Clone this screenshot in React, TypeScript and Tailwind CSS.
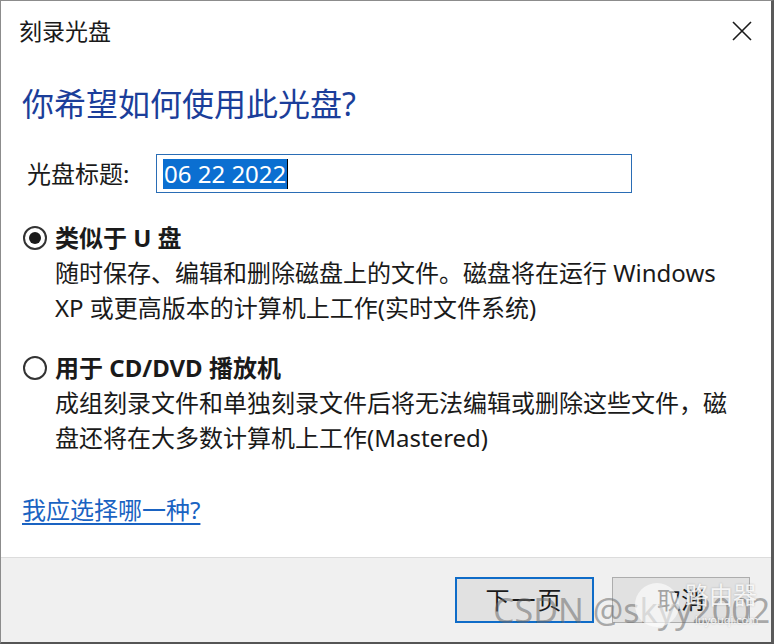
import React from "react";

function Radio({ checked }: { checked: boolean }) {
  return (
    <div className="w-[24px] h-[24px] rounded-full border-[2px] border-[#333333] bg-white flex items-center justify-center shrink-0">
      {checked && <div className="w-[12px] h-[12px] rounded-full bg-[#1a1a1a]" />}
    </div>
  );
}

export default function App() {
  return (
    <div
      className="w-[774px] h-[644px] bg-white border-l border-t border-[#8c8c8c] border-r-[3px] border-r-[#5a5a5a] border-b-[2px] border-b-[#555555] flex flex-col relative overflow-hidden text-[#1a1a1a]"
      style={{ fontFamily: '"Noto Sans", "Noto Sans CJK SC", sans-serif' }}
    >
      {/* title bar */}
      <div className="h-[61px] flex items-center justify-between pl-[18px] pr-[19px] shrink-0">
        <span className="text-[23px] leading-none text-[#1a1a1a]">刻录光盘</span>
        <svg width="20" height="20" viewBox="0 0 20 20" className="mt-[-2px]">
          <path d="M1 1 L19 19 M19 1 L1 19" stroke="#1a1a1a" strokeWidth="1.6" fill="none" />
        </svg>
      </div>

      {/* content */}
      <div className="flex-1 flex flex-col px-[21px]">
        <div className="mt-[20px] h-[44px] leading-[44px] text-[32px] text-[#1b3e9a] whitespace-nowrap">
          你希望如何使用此光盘?
        </div>

        <div className="mt-[28px] h-[39px] flex items-center">
          <span className="w-[134px] pl-[5px] text-[24px] leading-none">光盘标题:</span>
          <div className="w-[476px] h-[39px] border border-[#2a6db5] bg-white flex items-center pl-[6px]">
            <span className="bg-[#0b6fd1] text-white text-[24px] leading-[30px] h-[30px] px-[1px]">06 22 2022</span>
            <span className="w-[1px] h-[30px] bg-black" />
          </div>
        </div>

        <div className="mt-[28px] h-[34px] flex items-center gap-[8px] pl-[1px]">
          <Radio checked={true} />
          <span className="text-[24px] font-bold leading-none">类似于 U 盘</span>
        </div>
        <div className="pl-[33px] text-[24px] leading-[35px] whitespace-nowrap">
          <div>随时保存、编辑和删除磁盘上的文件。磁盘将在运行 Windows</div>
          <div>XP 或更高版本的计算机上工作(实时文件系统)</div>
        </div>

        <div className="mt-[26px] h-[34px] flex items-center gap-[8px] pl-[1px]">
          <Radio checked={false} />
          <span className="text-[24px] font-bold leading-none">用于 CD/DVD 播放机</span>
        </div>
        <div className="pl-[33px] text-[24px] leading-[35px] whitespace-nowrap">
          <div>成组刻录文件和单独刻录文件后将无法编辑或删除这些文件，磁</div>
          <div>盘还将在大多数计算机上工作(Mastered)</div>
        </div>

        <div className="mt-[38px] h-[34px] leading-[34px]">
          <span className="text-[24px] text-[#1a63c2] underline underline-offset-[4px]">我应选择哪一种?</span>
        </div>
      </div>

      {/* footer */}
      <div className="h-[85px] shrink-0 bg-[#f0f0f0] border-t border-[#dcdcdc] flex justify-end items-start pt-[19px] pr-[21px] gap-[18px]">
        <button className="w-[139px] h-[46px] bg-[#e1e1e1] border-[2px] border-[#0f6cc8] text-[24px] leading-none text-[#1a1a1a] tracking-[2px]">
          下一页
        </button>
        <button className="w-[138px] h-[46px] bg-[#e1e1e1] border border-[#adadad] text-[24px] leading-none text-[#1a1a1a]">
          取消
        </button>
      </div>

      {/* watermark overlays */}
      <div className="absolute left-[492px] top-[592px] text-[34px] leading-none text-[#6a6a6a]/55 whitespace-nowrap pointer-events-none">
        CSDN @skyy2002
      </div>
      <div className="absolute left-[634px] top-[582px] w-[44px] h-[44px] rounded-full bg-white/60 pointer-events-none" />
      <div className="absolute left-[684px] top-[582px] flex flex-col items-start pointer-events-none">
        <span className="text-[24px] leading-none text-white/85 [text-shadow:0_0_2px_rgba(0,0,0,0.25)]">路由器</span>
        <span className="text-[11px] leading-none text-white/85 [text-shadow:0_0_2px_rgba(0,0,0,0.25)] mt-[7px] ml-[10px]">luyouqi.com</span>
      </div>
    </div>
  );
}
